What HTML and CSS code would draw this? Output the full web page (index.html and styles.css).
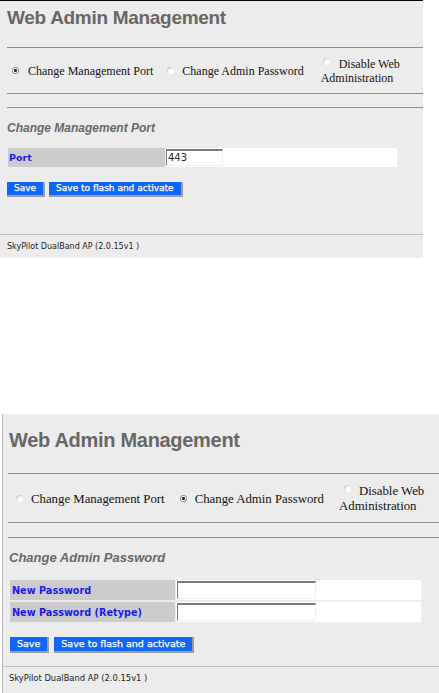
FILE: index.html
```html
<!DOCTYPE html>
<html lang="en">
<head>
<meta charset="utf-8">
<title>Web Admin Management</title>
<link rel="stylesheet" href="styles.css">
</head>
<body>
<main class="page">
  <section class="panel panel-a">
    <h1 class="title">Web Admin Management</h1>
    <hr class="rule rule-head">
    <div class="modes">
      <label class="mode mode-1"><span class="radio is-on"></span>Change Management Port</label>
      <label class="mode mode-2"><span class="radio"></span>Change Admin Password</label>
      <label class="mode mode-3"><span class="radio"></span>Disable Web<br>Administration</label>
    </div>
    <hr class="rule rule-mid">
    <hr class="rule rule-sec">
    <h2 class="subtitle">Change Management Port</h2>
    <div class="form">
      <div class="label">Port</div>
      <div class="field"><span class="input">443</span></div>
    </div>
    <div class="buttons">
      <button class="btn" type="button">Save</button>
      <button class="btn" type="button">Save to flash and activate</button>
    </div>
    <hr class="foot-rule">
    <p class="footer">SkyPilot DualBand AP (2.0.15v1 )</p>
  </section>

  <section class="panel panel-b">
    <h1 class="title">Web Admin Management</h1>
    <hr class="rule rule-head">
    <div class="modes">
      <label class="mode mode-1"><span class="radio"></span>Change Management Port</label>
      <label class="mode mode-2"><span class="radio is-on"></span>Change Admin Password</label>
      <label class="mode mode-3"><span class="radio"></span>Disable Web<br>Administration</label>
    </div>
    <hr class="rule rule-mid">
    <hr class="rule rule-sec">
    <h2 class="subtitle">Change Admin Password</h2>
    <div class="form">
      <div class="label">New Password</div>
      <div class="field"><span class="input"></span></div>
      <div class="label">New Password (Retype)</div>
      <div class="field"><span class="input"></span></div>
    </div>
    <div class="buttons">
      <button class="btn" type="button">Save</button>
      <button class="btn" type="button">Save to flash and activate</button>
    </div>
    <hr class="foot-rule">
    <p class="footer">SkyPilot DualBand AP (2.0.15v1 )</p>
  </section>
</main>
</body>
</html>
```

FILE: styles.css
```css
* { box-sizing: border-box; }

html, body {
  margin: 0;
  padding: 0;
  background: #ffffff;
}

body {
  width: 439px;
  height: 693px;
  overflow: hidden;
  font-family: "Liberation Serif", "Times New Roman", serif;
}

.panel {
  background: #ececec;
  overflow: hidden;
}

.panel-a {
  width: 423px;
  height: 258px;
  border-top: 1px solid #000;
  padding-left: 7px;
}

.panel-b {
  margin: 156px 0 0 2px;
  height: 279px;
  border-left: 1px solid #b8b8b8;
  padding-left: 5px;
}

/* heading */
.title {
  margin: 6px 0 0;
  font: bold 19px/22px "Liberation Sans", Arial, sans-serif;
  letter-spacing: -0.3px;
  color: #676767;
}
.panel-b .title {
  margin: 14px 0 0 1px;
  font-size: 20px;
  line-height: 24px;
}

/* rules */
.rule {
  display: block;
  height: 0;
  margin: 0;
  border: 0;
  border-top: 1px solid #8c8c8c;
}
.panel-a .rule-head { margin-top: 18px; }
.panel-a .rule-mid { margin-top: 8px; }
.panel-a .rule-sec { margin-top: 13px; }
.panel-b .rule-head { margin-top: 21px; }
.panel-b .rule-mid { margin-top: 8px; }
.panel-b .rule-sec { margin-top: 14px; }

/* mode selector */
.modes {
  display: flex;
  align-items: center;
  height: 28px;
  margin-top: 9px;
  font-size: 12px;
  line-height: 14px;
  color: #111;
}
.panel-b .modes {
  height: 30px;
  margin-top: 10px;
  font-size: 12.8px;
  line-height: 15px;
}

.mode { display: block; white-space: nowrap; }
.panel-a .mode-1 { padding-left: 5px; }
.panel-a .mode-2 { margin-left: 14px; }
.panel-a .mode-3 { margin-left: 17px; }
.panel-b .mode-1 { padding-left: 8px; }
.panel-b .mode-2 { margin-left: 15px; }
.panel-b .mode-3 { margin-left: 15px; }

.radio {
  display: inline-block;
  width: 7px;
  height: 7px;
  margin-right: 9px;
  border-radius: 50%;
  vertical-align: 1px;
  background: radial-gradient(circle at 62% 66%, #ffffff 0, #ffffff 35%, #d6d6d6 65%, #8e8e8e 100%);
}
.panel-a .mode-2 .radio { margin-right: 8px; }
.panel-a .mode-3 .radio { margin: 0 9px 0 2px; vertical-align: 3px; }
.panel-b .radio { margin-right: 8px; }
.panel-b .mode-3 .radio { margin: 0 8px 0 5px; vertical-align: 3px; }

.radio.is-on {
  background: radial-gradient(circle at 50% 50%, #222 0, #222 1.2px, #ffffff 1.8px, #ffffff 100%);
  box-shadow: inset 0 0 0 1px #8a8a8a;
}

/* section title */
.subtitle {
  margin: 13px 0 0;
  font: italic bold 12px/14px "Liberation Sans", Arial, sans-serif;
  color: #686868;
}
.panel-b .subtitle {
  margin: 12px 0 0 1px;
  font-size: 13px;
  line-height: 15px;
}

/* form table */
.form {
  display: grid;
  grid-template-columns: 157px 231px;
  grid-auto-rows: 19px;
  column-gap: 1px;
  margin: 13px 0 0 1px;
}
.panel-b .form {
  grid-template-columns: 165px 245px;
  grid-auto-rows: 20px;
  row-gap: 2px;
  margin: 15px 0 0 2px;
}

.label {
  display: flex;
  align-items: center;
  padding-left: 1px;
  background: #cccccc;
  font: bold 9.5px "DejaVu Sans", Verdana, sans-serif;
  color: #1a1aee;
}
.panel-b .label {
  padding-left: 2px;
  font-size: 9.7px;
}

.field {
  background: #ffffff;
}

.input {
  display: block;
  width: 57px;
  height: 17px;
  margin-top: 1px;
  padding-left: 1px;
  border-top: 2px solid #7b7b7b;
  border-left: 1px solid #7b7b7b;
  border-right: 1px solid #f0f0f0;
  border-bottom: 1px solid #f0f0f0;
  background: #ffffff;
  font: 10px/14px "DejaVu Sans", Verdana, sans-serif;
  color: #222;
}
.panel-b .input {
  width: 139px;
  height: 18px;
  margin-left: 1px;
}

/* buttons */
.buttons {
  display: flex;
  gap: 4px;
  margin-top: 15px;
}
.panel-b .buttons {
  gap: 5px;
  margin: 15px 0 0 2px;
}

.btn {
  height: 15px;
  margin: 0;
  padding: 0 7px;
  border: 0;
  border-right: 2px solid #9c9c9c;
  border-bottom: 2px solid #9c9c9c;
  border-radius: 0;
  background: #0f66ff;
  color: #ffffff;
  font: 9px/13px "DejaVu Sans", Verdana, sans-serif;
  -webkit-text-stroke: 0.25px #ffffff;
  white-space: nowrap;
}
.panel-b .btn {
  height: 16px;
  font-size: 9.5px;
  line-height: 14px;
}

/* footer */
.foot-rule {
  display: block;
  height: 0;
  margin: 37px 0 0 -7px;
  border: 0;
  border-top: 1px solid #bcbcbc;
}
.panel-b .foot-rule {
  margin: 13px 0 0 -5px;
}

.footer {
  margin: 7px 0 0;
  font: 8px/10px "DejaVu Sans", Verdana, sans-serif;
  color: #222;
}
.panel-b .footer {
  margin: 6px 0 0 1px;
  font-size: 8.4px;
  line-height: 11px;
}
```
